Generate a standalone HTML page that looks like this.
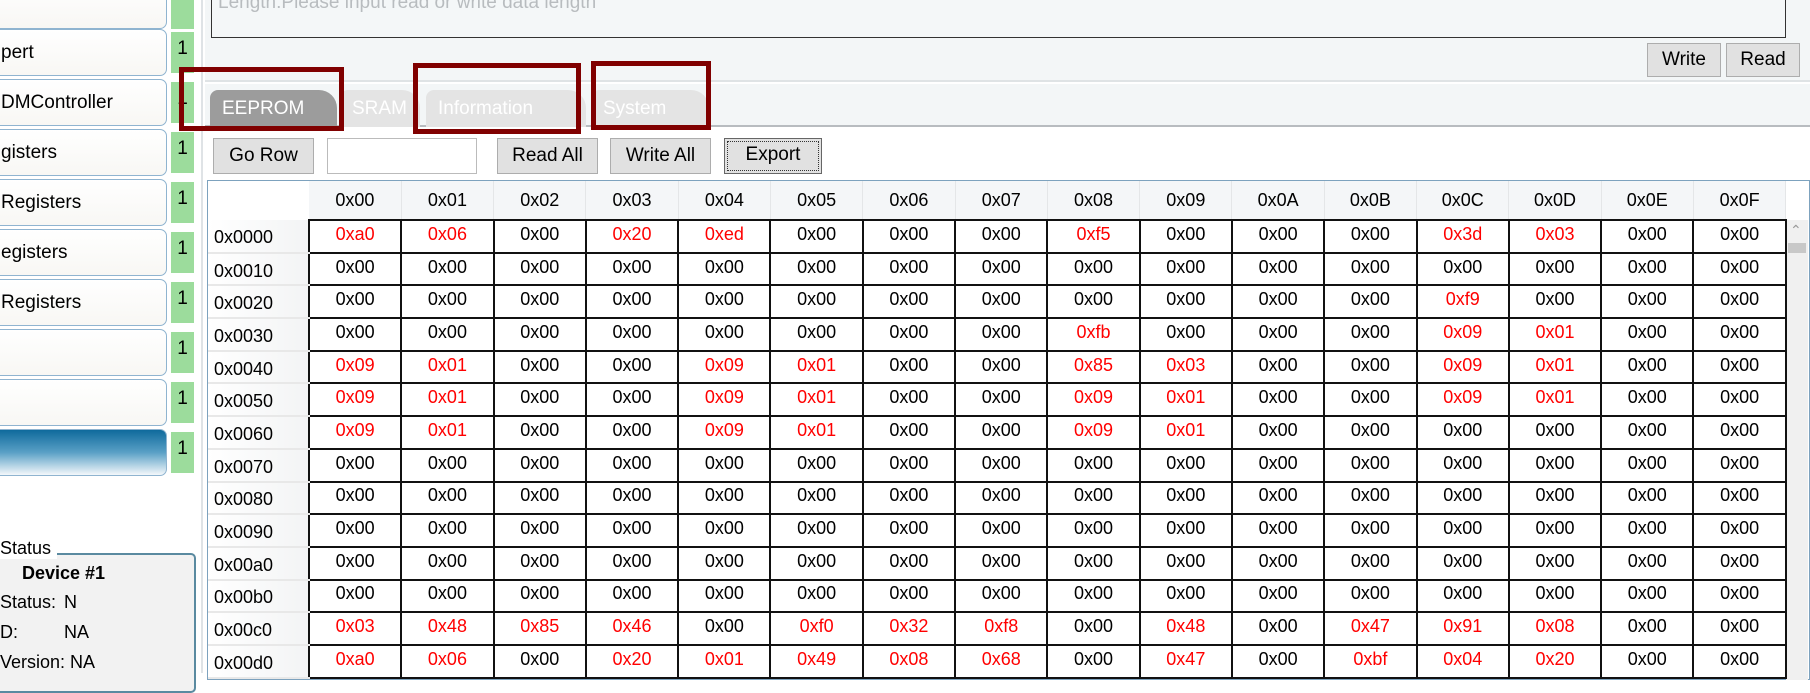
<!DOCTYPE html>
<html><head><meta charset="utf-8"><style>
*{box-sizing:border-box;margin:0;padding:0}
body{width:1810px;height:673px;overflow:hidden;background:#fff;font-family:"Liberation Sans",sans-serif;position:relative;color:#000}
.a{position:absolute}
.lb{position:absolute;left:-10px;width:177px;height:47px;border:1px solid #8fb4d0;border-radius:7px;background:linear-gradient(#fff,#f8f7f4);font-size:19px;line-height:45px;padding-left:10px;white-space:nowrap;overflow:hidden}
.gb{position:absolute;left:171px;width:23px;height:41px;background:#9cdc9c;font-size:19px;text-align:center;line-height:34px}
.btn{position:absolute;background:#e1e1e1;border:1px solid #adadad;font-size:19px;text-align:center}
.tab{position:absolute;top:90px;height:37px;font-size:19px;color:#fff;padding-left:12px;line-height:38px;border-radius:8px 18px 0 0}
.rb{position:absolute;border:5px solid #800000}
table{border-collapse:collapse;position:absolute;left:208px;top:181px;font-size:18px}
td{height:32.7px;text-align:center;border:2px solid #111;width:92.3px;padding-bottom:4px}
td.l{border:none;border-bottom:2px solid #e8e8e8;text-align:left;padding-left:6px;width:101px;background:linear-gradient(90deg,#fff,#f3f4f5);padding-top:4px;padding-bottom:0}
th{font-weight:normal;height:39px;background:#f4f6f8;border-right:1px solid #e4e6e8;width:92.3px}
th.c{background:#fff;border:none}
.r{color:#f00}
</style></head><body>
<!-- left -->
<div class="lb" style="top:-18px"></div><div class="gb" style="top:-12px"></div>
<div class="lb" style="top:29px">pert</div><div class="gb" style="top:32px">1</div>
<div class="lb" style="top:79px">DMController</div><div class="gb" style="top:82px">1</div>
<div class="lb" style="top:129px">gisters</div><div class="gb" style="top:132px">1</div>
<div class="lb" style="top:179px">Registers</div><div class="gb" style="top:182px">1</div>
<div class="lb" style="top:229px">egisters</div><div class="gb" style="top:232px">1</div>
<div class="lb" style="top:279px">Registers</div><div class="gb" style="top:282px">1</div>
<div class="lb" style="top:329px"></div><div class="gb" style="top:332px">1</div>
<div class="lb" style="top:379px"></div><div class="gb" style="top:382px">1</div>
<div class="lb" style="top:429px;background:linear-gradient(#0f6a9c,#5aa0c6 50%,#f4f8fb)"></div><div class="gb" style="top:432px">1</div>
<div class="a" style="left:201px;top:0;width:2px;height:673px;background:#dfe3e6"></div>
<div class="a" style="left:-10px;top:553px;width:206px;height:140px;border:2px solid #5a8aa0;border-radius:5px;background:#f2f2f2"></div>
<div class="a" style="left:0;top:538px;font-size:18px;background:#fff;padding-right:6px">Status</div>
<div class="a" style="left:22px;top:563px;font-size:18px;font-weight:bold">Device #1</div>
<div class="a" style="left:0;top:592px;font-size:18px">Status:</div><div class="a" style="left:64px;top:592px;font-size:18px">N</div>
<div class="a" style="left:0;top:622px;font-size:18px">D:</div><div class="a" style="left:64px;top:622px;font-size:18px">NA</div>
<div class="a" style="left:0;top:652px;font-size:18px">Version: NA</div>
<!-- right top -->
<div class="a" style="left:205px;top:0;width:1605px;height:82px;background:#f3f6f7;border-bottom:2px solid #dfe3e5"></div>
<div class="a" style="left:211px;top:-5px;width:1575px;height:43px;border:1px solid #333;background:#f4f7f8;color:#b8bcbf;font-size:19px;padding-left:6px;line-height:14px">Length:Please input read or write data length</div>
<div class="btn" style="left:1647px;top:43px;width:74px;height:34px;line-height:32px">Write</div>
<div class="btn" style="left:1726px;top:43px;width:74px;height:34px;line-height:32px">Read</div>
<div class="a" style="left:205px;top:84px;width:1605px;height:43px;background:#f3f6f7;border-bottom:2px solid #b8bcc0"></div>
<div class="tab" style="left:210px;width:127px;background:#9c9c9c">EEPROM</div>
<div class="tab" style="left:340px;width:80px;background:#e4e4e4">SRAM</div>
<div class="tab" style="left:426px;width:160px;background:#e4e4e4">Information</div>
<div class="tab" style="left:591px;width:118px;background:#e4e4e4">System</div>
<div class="rb" style="left:179px;top:67px;width:165px;height:64px"></div>
<div class="rb" style="left:413px;top:63px;width:168px;height:71px"></div>
<div class="rb" style="left:591px;top:61px;width:120px;height:69px"></div>
<div class="btn" style="left:213px;top:138px;width:101px;height:36px;line-height:34px">Go Row</div>
<div class="a" style="left:327px;top:138px;width:150px;height:36px;border:1px solid #bbb"></div>
<div class="btn" style="left:497px;top:138px;width:101px;height:36px;line-height:34px">Read All</div>
<div class="btn" style="left:610px;top:138px;width:101px;height:36px;line-height:34px">Write All</div>
<div class="btn" style="left:724px;top:138px;width:98px;height:36px;line-height:32px;border:1px solid #666;outline:1px dotted #333;outline-offset:-4px">Export</div>
<div class="a" style="left:207px;top:180px;width:1603px;height:500px;border:1px solid #7da2be"></div>
<div class="a" style="left:1786px;top:220px;width:22px;height:460px;background:#f0f0f0"></div>
<div class="a" style="left:1788px;top:243px;width:18px;height:10px;background:#c8c8c8"></div>
<div class="a" style="left:1790px;top:222px;color:#999;font-size:14px">&#8963;</div>
<table id="t"><tr><th class="c" style="width:101px"></th></tr></table>
<script>
var d=[
"a0 06 00 20 ed 00 00 00 f5 00 00 00 3d 03 00 00",
"00 00 00 00 00 00 00 00 00 00 00 00 00 00 00 00",
"00 00 00 00 00 00 00 00 00 00 00 00 f9 00 00 00",
"00 00 00 00 00 00 00 00 fb 00 00 00 09 01 00 00",
"09 01 00 00 09 01 00 00 85 03 00 00 09 01 00 00",
"09 01 00 00 09 01 00 00 09 01 00 00 09 01 00 00",
"09 01 00 00 09 01 00 00 09 01 00 00 00 00 00 00",
"00 00 00 00 00 00 00 00 00 00 00 00 00 00 00 00",
"00 00 00 00 00 00 00 00 00 00 00 00 00 00 00 00",
"00 00 00 00 00 00 00 00 00 00 00 00 00 00 00 00",
"00 00 00 00 00 00 00 00 00 00 00 00 00 00 00 00",
"00 00 00 00 00 00 00 00 00 00 00 00 00 00 00 00",
"03 48 85 46 00 f0 32 f8 00 48 00 47 91 08 00 00",
"a0 06 00 20 01 49 08 68 00 47 00 bf 04 20 00 00"];
var h='<tr><th class="c" style="width:101px"></th>';
for(var i=0;i<16;i++)h+='<th>0x0'+i.toString(16).toUpperCase()+'</th>';
h+='</tr>';
for(var r=0;r<d.length;r++){h+='<tr><td class="l">0x00'+r.toString(16)+'0</td>';
d[r].split(' ').forEach(function(v){h+='<td'+(v!='00'?' class="r"':'')+'>0x'+v+'</td>'});h+='</tr>';}
document.getElementById('t').innerHTML=h;
</script>
</body></html>
